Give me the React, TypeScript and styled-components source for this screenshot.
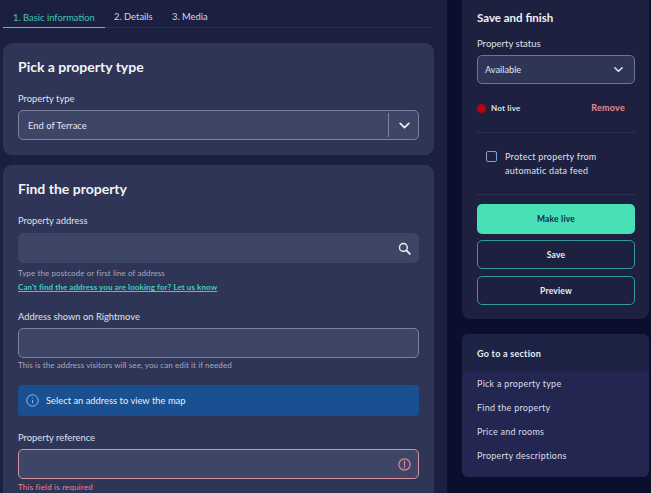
import React from "react";
import styled, { createGlobalStyle } from "styled-components";

const Global = createGlobalStyle`
  html, body { margin: 0; padding: 0; background: #0b0f2e; }
  body { font-family: "Lato", "Noto Sans", sans-serif; }
  * { box-sizing: border-box; }
`;

const Page = styled.div`
  width: 651px; height: 493px; overflow: hidden; display: flex;
  background: #0b0f2e; color: #eef0f6;
`;
const Main = styled.main`
  width: 447px; height: 493px; flex: none; overflow: hidden;
  background: #1c2040; padding: 0 13px 0 3px;
`;
const Side = styled.aside`
  width: 204px; flex: none; padding: 0 2px 0 15px;
  display: flex; flex-direction: column; gap: 15px;
`;
const Tabs = styled.nav`
  display: flex; height: 28px; border-bottom: 1px solid #2a2d4e; margin-bottom: 15px;
`;
const Tab = styled.div<{ $active?: boolean; $w: number }>`
  width: ${p => p.$w}px; height: 28px; padding-top: ${p => (p.$active ? 11 : 10)}px; padding-left: ${p => (p.$active ? 10 : 9)}px;
  font-size: 9.4px; line-height: 14px; font-weight: 400; white-space: nowrap;
  color: ${p => (p.$active ? "#3fc4b8" : "#d4d6e0")};
  border-bottom: ${p => (p.$active ? "1px solid #46c9b6" : "none")};
`;
const Card = styled.section`
  background: #2e3557; border-radius: 9px; padding: 15px; margin-bottom: 10px;
`;
const CardTitle = styled.h2`
  margin: 0; font-size: 14px; line-height: 18px; font-weight: 700; color: #f3f4f8;
`;
const Label = styled.div<{ $top: number; $bottom?: number }>`
  margin-top: ${p => p.$top}px; margin-bottom: ${p => p.$bottom ?? 4}px;
  font-size: 9.4px; line-height: 14px; font-weight: 400; color: #dfe1ea;
`;
const Field = styled.div<{ $kind?: "plain" | "outline" | "error" }>`
  height: 30px; border-radius: 5px; background: #3e4668; display: flex; align-items: center;
  color: #e4e6ef; font-size: 9.4px;
  border: ${p => (p.$kind === "error" ? "1.5px" : "1px")} solid ${p => (p.$kind === "plain" ? "#3e4668" : p.$kind === "error" ? "#d9929e" : "#7d839c")};
`;
const FieldText = styled.span`
  flex: 1; padding-left: 9px;
`;
const SelectDivider = styled.span`
  width: 1px; height: 24px; background: #7d839c; margin-right: 5px;
`;
const IconSlot = styled.span`
  width: 20px; margin-right: 4px; display: flex; justify-content: center; align-items: center;
`;
const Hint = styled.div<{ $top?: number }>`
  margin-top: ${p => p.$top ?? 1}px; font-size: 8px; line-height: 12px; color: #a5a9bb; letter-spacing: .1px;
`;
const HelpLink = styled.a`
  display: block; margin-top: 2px; font-size: 8px; line-height: 12px; font-weight: 700;
  color: #42cdb9; text-decoration: underline; letter-spacing: .09px;
`;
const Banner = styled.div`
  margin-top: 14px; height: 31px; background: #1a5092; border-radius: 4px; padding-left: 8px;
  display: flex; align-items: center; gap: 7px; font-size: 9.4px; color: #e7edf6;
`;
const ErrorText = styled.div`
  margin-top: 2px; font-size: 8px; line-height: 12px; color: #e48590; letter-spacing: .2px;
`;
const Panel = styled.section`
  height: 319px; background: #1d203f; border-radius: 0 0 8px 8px; padding: 10px 14px 0 15px;
`;
const PanelTitle = styled.h3`
  margin: 0; font-size: 11.5px; line-height: 15px; font-weight: 700; color: #f0f1f6;
`;
const PanelLabel = styled.div`
  margin-top: 12px; margin-bottom: 4px; font-size: 9.5px; line-height: 14px; color: #dfe1ea;
`;
const StatusSelect = styled.div`
  height: 29px; border-radius: 5px; background: #2f3557; border: 1px solid #6f7591;
  display: flex; align-items: center; justify-content: space-between; padding: 0 10px 0 7px;
  font-size: 9.2px; color: #e4e6ef;
`;
const StatusRow = styled.div`
  height: 18px; margin-top: 15px; display: flex; align-items: center;
`;
const Dot = styled.span`
  width: 9px; height: 9px; border-radius: 50%; background: #b8000e; margin-right: 5px;
`;
const NotLive = styled.span`
  flex: 1; font-size: 8px; font-weight: 700; color: #dfe1ea; letter-spacing: .2px;
`;
const Remove = styled.span`
  font-size: 9px; font-weight: 700; color: #e58a94; letter-spacing: .25px; margin: 0 10px 1px 0;
`;
const Rule = styled.div<{ $top: number }>`
  height: 1px; background: #2d3050; margin-top: ${p => p.$top}px;
`;
const Protect = styled.div`
  height: 61px; padding: 17px 0 0 9px; display: flex; gap: 8px;
`;
const Check = styled.span`
  width: 11px; height: 11px; flex: none; margin-top: 1px; border: 1.5px solid #7fa3dd; border-radius: 2px;
`;
const ProtectText = styled.div`
  font-size: 9px; line-height: 14px; color: #dfe1ea; letter-spacing: .25px;
`;
const Primary = styled.div`
  margin-top: 9px; height: 30px; border-radius: 5px; background: #48e0b6; color: #14294a;
  display: flex; align-items: center; justify-content: center; font-size: 8.5px; font-weight: 700; letter-spacing: .2px;
`;
const Outline = styled.div`
  margin-top: 6px; height: 29px; border-radius: 5px; border: 1px solid #2f9a96; color: #eceef4;
  display: flex; align-items: center; justify-content: center; font-size: 8.5px; font-weight: 700; letter-spacing: .2px;
  & + & { margin-top: 7px; }
`;
const SectionNav = styled.section`
  height: 143px; border-radius: 6px; overflow: hidden; background: #222650;
`;
const NavHead = styled.div`
  height: 38px; background: #1c2345; padding: 0 15px; display: flex; align-items: center;
  font-size: 9px; font-weight: 700; color: #eceef4; letter-spacing: .25px;
`;
const NavList = styled.ul`
  margin: -1px 0 0; padding: 0 15px; list-style: none;
`;
const NavItem = styled.li`
  height: 24px; display: flex; align-items: center; font-size: 9px; color: #dcdee8; letter-spacing: .25px;
`;

const Chevron = ({ size = 12 }: { size?: number }) => (
  <svg width={size} height={size} viewBox="0 0 12 12" fill="none" stroke="#eef0f6" strokeWidth="1.5" strokeLinecap="round" strokeLinejoin="round">
    <path d="M2 4l4 4 4-4" />
  </svg>
);

export default function App() {
  return (
    <Page>
      <Global />
      <Main>
        <Tabs>
          <Tab $active $w={102}>1. Basic information</Tab>
          <Tab $w={58}>2. Details</Tab>
          <Tab $w={60}>3. Media</Tab>
        </Tabs>
        <Card>
          <CardTitle>Pick a property type</CardTitle>
          <Label $top={16}>Property type</Label>
          <Field>
            <FieldText>End of Terrace</FieldText>
            <SelectDivider />
            <IconSlot><Chevron size={13} /></IconSlot>
          </Field>
        </Card>
        <Card>
          <CardTitle>Find the property</CardTitle>
          <Label $top={16} $bottom={5}>Property address</Label>
          <Field $kind="plain">
            <FieldText />
            <IconSlot>
              <svg width="13" height="13" viewBox="0 0 13 13" fill="none" stroke="#f0f1f6" strokeWidth="1.4" strokeLinecap="round">
                <circle cx="5.4" cy="5.4" r="3.9" />
                <path d="M8.4 8.4l3.4 3.4" strokeWidth="1.8" />
              </svg>
            </IconSlot>
          </Field>
          <Hint $top={4}>Type the postcode or first line of address</Hint>
          <HelpLink>Can't find the address you are looking for? Let us know</HelpLink>
          <Label $top={17}>Address shown on Rightmove</Label>
          <Field />
          <Hint>This is the address visitors will see, you can edit it if needed</Hint>
          <Banner>
            <svg width="13" height="13" viewBox="0 0 13 13" fill="none" stroke="#8db9ee" strokeWidth="1">
              <circle cx="6.5" cy="6.5" r="5.7" />
              <path d="M6.5 6v3.2M6.5 3.6v.8" />
            </svg>
            Select an address to view the map
          </Banner>
          <Label $top={15}>Property reference</Label>
          <Field $kind="error">
            <FieldText />
            <IconSlot>
              <svg width="13" height="13" viewBox="0 0 13 13" fill="none" stroke="#e48590" strokeWidth="1.2">
                <circle cx="6.5" cy="6.5" r="5.6" />
                <path d="M6.5 3.2v4M6.5 8.8v1" strokeLinecap="round" />
              </svg>
            </IconSlot>
          </Field>
          <ErrorText>This field is required</ErrorText>
        </Card>
      </Main>
      <Side>
        <Panel>
          <PanelTitle>Save and finish</PanelTitle>
          <PanelLabel>Property status</PanelLabel>
          <StatusSelect>Available<Chevron size={11} /></StatusSelect>
          <StatusRow>
            <Dot />
            <NotLive>Not live</NotLive>
            <Remove>Remove</Remove>
          </StatusRow>
          <Rule $top={15} />
          <Protect>
            <Check />
            <ProtectText>Protect property from<br />automatic data feed</ProtectText>
          </Protect>
          <Rule $top={0} />
          <Primary>Make live</Primary>
          <Outline>Save</Outline>
          <Outline>Preview</Outline>
        </Panel>
        <SectionNav>
          <NavHead>Go to a section</NavHead>
          <NavList>
            <NavItem>Pick a property type</NavItem>
            <NavItem>Find the property</NavItem>
            <NavItem>Price and rooms</NavItem>
            <NavItem>Property descriptions</NavItem>
          </NavList>
        </SectionNav>
      </Side>
    </Page>
  );
}
